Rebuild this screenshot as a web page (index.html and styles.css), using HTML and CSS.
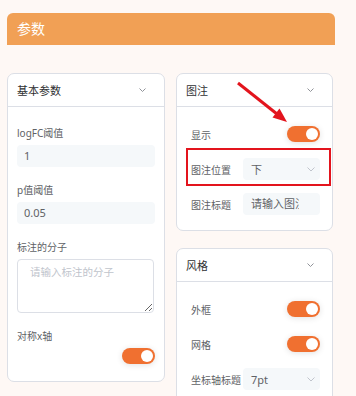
FILE: index.html
```html
<!DOCTYPE html>
<html lang="zh">
  <head>
    <meta charset="utf-8">
    <title>参数</title>
    <link rel="stylesheet" href="styles.css">
  </head>
  <body>
  <div class="page">
    <div class="panel-head">参数</div>

    <div class="cols">
      <div class="col col-left">
        <section class="card card-basic">
          <div class="card-head">
            <span>基本参数</span>
            <svg class="chev" width="7" height="4" viewBox="0 0 7 4"><path d="M0.5 0.5 L3.5 3.5 L6.5 0.5" /></svg>
          </div>
          <div class="card-body">
            <div class="field">
              <div class="label">logFC阈值</div>
              <div class="input">1</div>
            </div>
            <div class="field">
              <div class="label">p值阈值</div>
              <div class="input">0.05</div>
            </div>
            <div class="field">
              <div class="label">标注的分子</div>
              <textarea class="area" placeholder="请输入标注的分子"></textarea>
            </div>
            <div class="field field-last">
              <div class="label">对称x轴</div>
              <div class="switch-wrap"><span class="switch"><span class="knob"></span></span></div>
            </div>
          </div>
        </section>
      </div>

      <div class="col col-right">
        <section class="card">
          <div class="card-head">
            <span>图注</span>
            <svg class="chev" width="7" height="4" viewBox="0 0 7 4"><path d="M0.5 0.5 L3.5 3.5 L6.5 0.5" /></svg>
          </div>
          <div class="card-body form">
            <div class="row">
              <div class="rlabel">显示</div>
              <div class="rctl rctl-switch"><span class="switch"><span class="knob"></span></span></div>
            </div>
            <div class="row">
              <div class="rlabel">图注位置</div>
              <div class="rctl select"><span>下</span><svg class="schev" width="8" height="5" viewBox="0 0 8 5"><path d="M0.5 0.5 L4 4 L7.5 0.5" /></svg></div>
            </div>
            <div class="row">
              <div class="rlabel">图注标题</div>
              <div class="rctl text-in"><span>请输入图注</span></div>
            </div>
          </div>
        </section>

        <section class="card card-style">
          <div class="card-head">
            <span>风格</span>
            <svg class="chev" width="7" height="4" viewBox="0 0 7 4"><path d="M0.5 0.5 L3.5 3.5 L6.5 0.5" /></svg>
          </div>
          <div class="card-body form">
            <div class="row">
              <div class="rlabel">外框</div>
              <div class="rctl rctl-switch"><span class="switch"><span class="knob"></span></span></div>
            </div>
            <div class="row">
              <div class="rlabel">网格</div>
              <div class="rctl rctl-switch"><span class="switch"><span class="knob"></span></span></div>
            </div>
            <div class="row">
              <div class="rlabel">坐标轴标题</div>
              <div class="rctl select"><span>7pt</span><svg class="schev" width="8" height="5" viewBox="0 0 8 5"><path d="M0.5 0.5 L4 4 L7.5 0.5" /></svg></div>
            </div>
          </div>
        </section>
      </div>
    </div>

    <!-- annotation marks drawn over the form -->
    <div class="mark"></div>
    <svg class="arrow" width="356" height="396" viewBox="0 0 356 396">
      <line x1="238" y1="83" x2="277" y2="114" />
      <polygon points="287,122 272.5,117.5 279.5,108.5" />
    </svg>
  </div>
  </body>
</html>
```

FILE: styles.css
```css
html, body {
  margin: 0;
  padding: 0;
}
body {
  background: #fef8f5;
  font-family: "Noto Sans", "Noto Sans CJK SC", sans-serif;
  color: #606266;
  font-size: 10px;
}

.page {
  position: relative;
  width: 356px;
  height: 396px;
  overflow: hidden;
  padding: 13px 0 0 7px;
  box-sizing: border-box;
}

.panel-head {
  width: 328px;
  height: 32px;
  box-sizing: border-box;
  background: #f1a055;
  border-radius: 6px 6px 0 0;
  color: #fff;
  font-size: 14px;
  line-height: 32px;
  padding-left: 10px;
}

.cols {
  display: flex;
  gap: 11px;
  margin-top: 28px;
  align-items: flex-start;
}
.col-left { width: 158px; }
.col-right { width: 157px; }

.card {
  background: #fff;
  border: 1px solid #dcdfe6;
  border-radius: 7px;
}
.card-style {
  margin-top: 17px;
}

.card-head {
  height: 32px;
  display: flex;
  align-items: center;
  justify-content: space-between;
  padding: 0 18px 0 9px;
  border-bottom: 1px solid #dcdfe6;
  color: #303133;
  font-size: 11px;
}
.chev path {
  fill: none;
  stroke: #909399;
  stroke-width: 1;
}

/* left card */
.card-basic .card-body {
  padding: 19px 9px 17px 9px;
}
.field {
  margin-bottom: 16px;
}
.field-last {
  margin-bottom: 0;
}
.label {
  height: 14px;
  line-height: 14px;
  margin-bottom: 5px;
  white-space: nowrap;
}
.input {
  height: 22px;
  line-height: 22px;
  background: #f5f8fa;
  border-radius: 4px;
  padding-left: 7px;
  font-size: 11px;
  color: #606266;
}
.area {
  display: block;
  width: 137px;
  height: 54px;
  box-sizing: border-box;
  margin: 0;
  border: 1px solid #dcdfe6;
  border-radius: 4px;
  padding: 5px 8px 0 12px;
  font-family: inherit;
  font-size: 10.5px;
  line-height: 14px;
  background: #fff;
  resize: vertical;
}
.area::placeholder {
  color: #c0c4cc;
}
.switch-wrap {
  display: flex;
  justify-content: flex-end;
}

.switch {
  width: 33px;
  height: 16px;
  box-sizing: border-box;
  border-radius: 8px;
  background: #f07030;
  display: flex;
  justify-content: flex-end;
  align-items: center;
  padding-right: 2px;
  box-shadow: 0 1px 6px rgba(0, 0, 0, 0.12);
}
.knob {
  width: 12px;
  height: 12px;
  border-radius: 50%;
  background: #fff;
}

/* right cards */
.form {
  padding: 16px 12px 15px 14px;
}
.row {
  display: flex;
  align-items: center;
  height: 22px;
  margin-bottom: 13px;
}
.row:last-child {
  margin-bottom: 0;
}
.rlabel {
  width: 52px;
  flex: none;
  white-space: nowrap;
}
.rctl {
  width: 77px;
  height: 22px;
  box-sizing: border-box;
}
.rctl-switch {
  display: flex;
  justify-content: flex-end;
  align-items: center;
}
.select {
  background: #f5f8fa;
  border-radius: 4px;
  display: flex;
  align-items: center;
  justify-content: space-between;
  padding: 0 5px 0 8px;
  font-size: 11px;
  color: #606266;
}
.schev path {
  fill: none;
  stroke: #c0c4cc;
  stroke-width: 1;
}
.text-in {
  background: #f5f8fa;
  border-radius: 4px;
  padding: 0 21px 0 8px;
  font-size: 11px;
  line-height: 22px;
  white-space: nowrap;
  overflow: hidden;
}
.text-in span {
  display: block;
  overflow: hidden;
}

/* annotations */
.mark {
  position: absolute;
  left: 186px;
  top: 148px;
  width: 145px;
  height: 38px;
  box-sizing: border-box;
  border: 2px solid #e3141d;
}
.arrow {
  position: absolute;
  left: 0;
  top: 0;
  pointer-events: none;
}
.arrow line {
  stroke: #e3141d;
  stroke-width: 3;
}
.arrow polygon {
  fill: #e3141d;
}
```
